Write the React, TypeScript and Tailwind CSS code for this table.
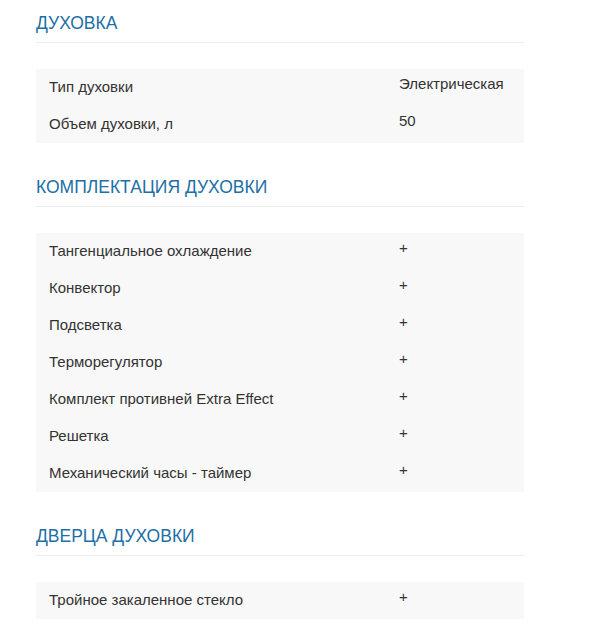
import React from "react";

type TRow = { label: string; value: string };

const sections: { title: string; rows: TRow[] }[] = [
  {
    title: "ДУХОВКА",
    rows: [
      { label: "Тип духовки", value: "Электрическая" },
      { label: "Объем духовки, л", value: "50" },
    ],
  },
  {
    title: "КОМПЛЕКТАЦИЯ ДУХОВКИ",
    rows: [
      { label: "Тангенциальное охлаждение", value: "+" },
      { label: "Конвектор", value: "+" },
      { label: "Подсветка", value: "+" },
      { label: "Терморегулятор", value: "+" },
      { label: "Комплект противней Extra Effect", value: "+" },
      { label: "Решетка", value: "+" },
      { label: "Механический часы - таймер", value: "+" },
    ],
  },
  {
    title: "ДВЕРЦА ДУХОВКИ",
    rows: [{ label: "Тройное закаленное стекло", value: "+" }],
  },
];

const CSpecSection = (props: { title: string; rows: TRow[] }) => {
  const { title, rows } = props;
  return (
    <div className="flex flex-col">
      <h3 className="text-[17.5px] leading-[22px] text-[#1d6fa5] pb-[8px] border-b border-[#eeeeee]">
        {title}
      </h3>
      <div className="mt-[26px] bg-[#f8f8f8] flex flex-col">
        {rows.map((row) => (
          <div key={row.label} className="flex h-[37px] text-[15px] text-[#333333]">
            <div className="w-[363px] pl-[13px] flex items-center">{row.label}</div>
            <div className="flex-1 pt-[4px]">{row.value}</div>
          </div>
        ))}
      </div>
    </div>
  );
};

const App = () => {
  return (
    <div
      className="min-h-screen bg-white pl-[36px] pt-[12px]"
      style={{ fontFamily: '"Liberation Sans", Arial, sans-serif' }}
    >
      <div className="w-[488px] flex flex-col gap-[33px]">
        {sections.map((s) => (
          <CSpecSection key={s.title} title={s.title} rows={s.rows} />
        ))}
      </div>
    </div>
  );
};

export default App;
